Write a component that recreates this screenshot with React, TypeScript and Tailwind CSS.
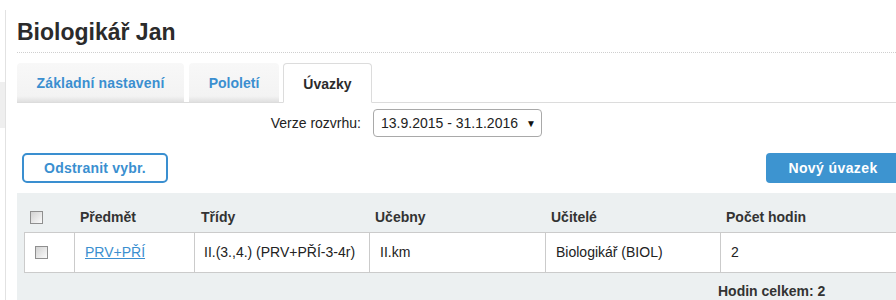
import React from 'react';

// --- Small pieces ---

const Checkbox = () => (
    <span className="inline-block w-[13px] h-[13px] border border-[#8f8f8f] bg-linear-to-br from-[#d2d2d2] to-[#fbfbfb]" />
);

const tabBase = 'h-[39px] flex items-center justify-center pt-[2px] text-[14px] font-bold rounded-t-[4px]';

const App = () => {
    return (
        <div className="w-[896px] h-[300px] overflow-hidden bg-white flex font-['Liberation_Sans',Arial,sans-serif] text-[#333]">
            {/* Sidebar stub */}
            <div className="w-[5px] shrink-0">
                <div className="mt-[82px] h-[46px] bg-[#efefef]" />
            </div>

            <div className="mt-[10px] border-l border-[#e2e2e2] pl-[11px] pt-[8px] shrink-0">
                <div className="w-[883px]">
                    <h1 className="text-[23px] leading-[28px] font-bold text-[#2b2b2b] pb-[6px] border-b border-dotted border-[#cfcfcf]">
                        Biologikář Jan
                    </h1>

                    {/* Tabs */}
                    <div className="mt-[10px] flex items-end border-b border-[#dcdcdc]">
                        <div className={`${tabBase} w-[167px] text-[#3b8fd0] tracking-[0.15px] bg-linear-to-b from-[#f8f8f8] via-[#f3f3f3] via-85% to-[#e0e0e0]`}>
                            Základní nastavení
                        </div>
                        <div className={`${tabBase} ml-[5px] w-[90px] text-[#3b8fd0] bg-linear-to-b from-[#f8f8f8] via-[#f3f3f3] via-85% to-[#e0e0e0]`}>
                            Pololetí
                        </div>
                        <div className={`${tabBase} ml-[4px] w-[89px] -mb-px h-[40px] bg-white border border-[#dcdcdc] border-b-white text-[#2b2b2b]`}>
                            Úvazky
                        </div>
                    </div>

                    {/* Version select */}
                    <div className="mt-[6px] flex items-center">
                        <span className="w-[344px] text-right text-[14px] text-[#222]">Verze rozvrhu:</span>
                        <div className="ml-[12px] w-[169px] h-[28px] border border-[#a9a9a9] rounded-[4px] pl-[7px] pr-[5px] flex items-center justify-between text-[14px] text-[#222]">
                            <span>13.9.2015 - 31.1.2016</span>
                            <span className="text-[10px] text-[#111]">▼</span>
                        </div>
                    </div>

                    {/* Actions */}
                    <div className="mt-[16px] flex justify-between">
                        <button className="ml-[5px] w-[146px] h-[30px] border-2 border-[#3a8fd0] rounded-[5px] text-[14px] font-bold text-[#3a8fd0] tracking-[0.2px]">
                            Odstranit vybr.
                        </button>
                        <button className="w-[134px] h-[30px] bg-[#3d94d0] rounded-[4px] text-[14px] font-bold text-white tracking-[0.4px]">
                            Nový úvazek
                        </button>
                    </div>

                    {/* Table */}
                    <div className="mt-[10px] w-[920px] h-[120px] bg-[#ecf0f1] pl-[7px]">
                        <div className="grid grid-cols-[50px_120px_175px_176px_175px_1fr] h-[39px] pt-[10px] items-center text-[14px] font-bold text-[#333]">
                            <div className="pl-[6px] flex"><Checkbox /></div>
                            <div className="pl-[6px]">Předmět</div>
                            <div className="pl-[7px]">Třídy</div>
                            <div className="pl-[6px]">Učebny</div>
                            <div className="pl-[6px]">Učitelé</div>
                            <div className="pl-[6px]">Počet hodin</div>
                        </div>
                        <div className="grid grid-cols-[49px_120px_175px_176px_175px_1fr] h-[41px] bg-white border border-[#cbcbcb] text-[14px] text-[#222]">
                            <div className="pl-[10px] flex items-center"><Checkbox /></div>
                            <div className="pl-[10px] border-l border-[#cbcbcb] flex items-center">
                                <a href="#" className="text-[#3b8fd0] underline">PRV+PŘÍ</a>
                            </div>
                            <div className="pl-[9px] border-l border-[#cbcbcb] flex items-center">II.(3.,4.) (PRV+PŘÍ-3-4r)</div>
                            <div className="pl-[10px] border-l border-[#cbcbcb] flex items-center">II.km</div>
                            <div className="pl-[10px] border-l border-[#cbcbcb] flex items-center">Biologikář (BIOL)</div>
                            <div className="pl-[10px] border-l border-[#cbcbcb] flex items-center">2</div>
                        </div>
                        <div className="pt-[10px] pl-[694px] text-[14px] leading-[16px] font-bold text-[#333]">
                            Hodin celkem: 2
                        </div>
                    </div>
                </div>
            </div>
        </div>
    );
};

export default App;
